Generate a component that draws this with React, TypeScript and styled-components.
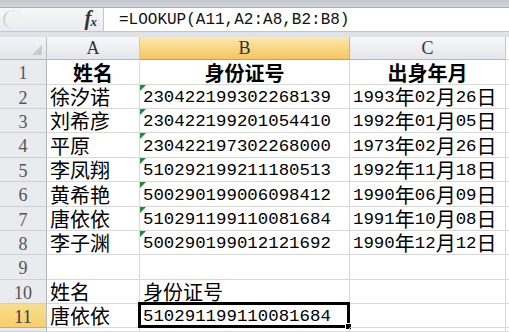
import React from 'react';
import styled, { createGlobalStyle } from 'styled-components';

const Global = createGlobalStyle`
  html, body { margin: 0; padding: 0; background: #fff; }
  body { font-family: "Noto Sans CJK SC", sans-serif; }
  #root { width: 509px; height: 332px; }
`;

const Frame = styled.div`
  width: 509px;
  height: 332px;
  overflow: hidden;
  display: flex;
  flex-direction: column;
  background: #dfe3e8;
`;

const TopBand = styled.div`
  flex: none;
  height: 8px;
  box-sizing: border-box;
  background: linear-gradient(#c3c8ce, #d4d8dd);
  border-bottom: 1px solid #a7acb3;
`;

const FormulaBar = styled.div`
  flex: none;
  height: 24px;
  display: flex;
  box-sizing: border-box;
  border-bottom: 1px solid #c3c7cd;
`;

const NameArea = styled.div`
  position: relative;
  width: 104px;
  box-sizing: border-box;
  display: flex;
  align-items: center;
  justify-content: flex-end;
  padding-right: 7px;
  background: linear-gradient(#f6f7f8, #e9ebee);
  border-right: 1px solid #c4c7cc;
`;

const Arc = styled.span`
  position: absolute;
  left: 3px;
  top: 2px;
  width: 18px;
  height: 18px;
  border-radius: 50%;
  border-left: 2px solid #cfd2d6;
  border-top: 1px solid #e2e4e7;
`;

const Fx = styled.span`
  display: inline-block;
  line-height: 20px;
  font-family: "Liberation Serif", serif;
  font-style: italic;
  font-weight: 700;
  font-size: 21px;
  color: #333;
  letter-spacing: -1px;
  sub {
    font-size: 13px;
    vertical-align: -1px;
  }
`;

const FormulaInput = styled.div`
  flex: 1;
  display: flex;
  align-items: center;
  padding-left: 15px;
  background: #fff;
  font-family: "Liberation Mono", monospace;
  font-size: 16px;
  color: #111;
`;

const Gap = styled.div`
  flex: none;
  height: 5px;
`;

const Sheet = styled.div`
  flex: 1;
  display: grid;
  grid-template-columns: 47px 93px 210px 156px 3px;
  grid-template-rows: 23px 25px 24px 24px 25px 24px 25px 24px 24px 25px 24px 24px 1fr;
  background: #fff;
`;

const Corner = styled.div`
  position: relative;
  box-sizing: border-box;
  background: linear-gradient(#f3f4f6, #e2e5e9);
  border-right: 1px solid #b9bec5;
  border-bottom: 1px solid #b2b8c0;
  &::after {
    content: "";
    position: absolute;
    right: 4px;
    bottom: 4px;
    width: 0;
    height: 0;
    border-left: 10px solid transparent;
    border-bottom: 10px solid #c8ccd1;
  }
`;

const ColHead = styled.div<{ $active?: boolean }>`
  box-sizing: border-box;
  display: flex;
  align-items: center;
  justify-content: center;
  font-family: "Liberation Serif", serif;
  font-size: 18px;
  line-height: 20px;
  color: #333;
  background: ${(p) =>
    p.$active
      ? 'linear-gradient(#fde9ae, #f5c55e)'
      : 'linear-gradient(#f7f8fa, #e3e6ea)'};
  border-right: 1px solid ${(p) => (p.$active ? '#e1ae4c' : '#c6cad0')};
  border-bottom: 1px solid ${(p) => (p.$active ? '#d79e3c' : '#b2b8c0')};
`;

const RowHead = styled.div<{ $active?: boolean }>`
  box-sizing: border-box;
  display: flex;
  align-items: center;
  justify-content: center;
  padding-top: 2px;
  font-family: "Liberation Serif", serif;
  font-size: 18px;
  line-height: 20px;
  color: ${(p) => (p.$active ? '#3a3a3a' : '#555')};
  background: ${(p) => (p.$active ? 'linear-gradient(#f9dd8e, #f5cf6c)' : '#e9ebee')};
  border-right: 1px solid #b2b8c0;
  border-bottom: 1px solid ${(p) => (p.$active ? '#d9ad4e' : '#cdd1d6')};
`;

const Cell = styled.div<{ $center?: boolean; $bold?: boolean }>`
  position: relative;
  box-sizing: border-box;
  display: flex;
  align-items: flex-end;
  justify-content: ${(p) => (p.$center ? 'center' : 'flex-start')};
  padding: 0 0 1px ${(p) => (p.$center ? '0' : '3px')};
  font-size: 20px;
  line-height: 20px;
  font-weight: ${(p) => (p.$bold ? 700 : 400)};
  color: #000;
  white-space: nowrap;
  border-right: 1px solid #d9d9d9;
  border-bottom: 1px solid #d9d9d9;
`;

const Edge = styled.div`
  box-sizing: border-box;
  background: #fff;
  border-bottom: 1px solid #d9d9d9;
`;

const Han = styled.span`
  display: inline-block;
  line-height: 20px;
`;

const Num = styled.span`
  display: inline-block;
  line-height: 18px;
  vertical-align: -2px;
  font-family: "Liberation Mono", monospace;
  font-size: 17.4px;
  font-weight: 400;
`;

const Flag = styled.span`
  position: absolute;
  top: 0;
  left: 0;
  width: 0;
  height: 0;
  border-top: 6px solid #1d8b38;
  border-right: 6px solid transparent;
`;

const Selection = styled.span`
  position: absolute;
  left: -2px;
  top: -2px;
  right: -1px;
  bottom: -1px;
  border: 3px solid #000;
  pointer-events: none;
`;

const Handle = styled.span`
  position: absolute;
  right: -5px;
  bottom: -5px;
  width: 5px;
  height: 5px;
  background: #000;
  border: 1px solid #fff;
`;

const Mixed: React.FC<{ text: string }> = ({ text }) => (
  <>
    {text
      .split(/([\x00-\x7f]+)/)
      .filter(Boolean)
      .map((part, i) =>
        /^[\x00-\x7f]+$/.test(part) ? <Num key={i}>{part}</Num> : <Han key={i}>{part}</Han>
      )}
  </>
);

type Row = {
  n: number | '';
  a?: string;
  b?: string;
  c?: string;
  header?: boolean;
  flag?: boolean;
  selected?: boolean;
};

const rows: Row[] = [
  { n: 1, a: '姓名', b: '身份证号', c: '出身年月', header: true },
  { n: 2, a: '徐汐诺', b: '230422199302268139', c: '1993年02月26日', flag: true },
  { n: 3, a: '刘希彦', b: '230422199201054410', c: '1992年01月05日', flag: true },
  { n: 4, a: '平原', b: '230422197302268000', c: '1973年02月26日', flag: true },
  { n: 5, a: '李凤翔', b: '510292199211180513', c: '1992年11月18日', flag: true },
  { n: 6, a: '黄希艳', b: '500290199006098412', c: '1990年06月09日', flag: true },
  { n: 7, a: '唐依依', b: '510291199110081684', c: '1991年10月08日', flag: true },
  { n: 8, a: '李子渊', b: '500290199012121692', c: '1990年12月12日', flag: true },
  { n: 9 },
  { n: 10, a: '姓名', b: '身份证号' },
  { n: 11, a: '唐依依', b: '510291199110081684', selected: true },
  { n: '' },
];

export default function App() {
  return (
    <>
      <Global />
      <Frame>
        <TopBand />
        <FormulaBar>
          <NameArea>
            <Arc />
            <Fx>
              f<sub>x</sub>
            </Fx>
          </NameArea>
          <FormulaInput>=LOOKUP(A11,A2:A8,B2:B8)</FormulaInput>
        </FormulaBar>
        <Gap />
        <Sheet>
          <Corner />
          <ColHead>A</ColHead>
          <ColHead $active>B</ColHead>
          <ColHead>C</ColHead>
          <Edge />
          {rows.map((r, i) => (
            <React.Fragment key={i}>
              <RowHead $active={r.selected}>{r.n}</RowHead>
              <Cell $center={r.header} $bold={r.header}>
                {r.a && <Mixed text={r.a} />}
              </Cell>
              <Cell $center={r.header} $bold={r.header}>
                {r.flag && <Flag />}
                {r.b && <Mixed text={r.b} />}
                {r.selected && (
                  <Selection>
                    <Handle />
                  </Selection>
                )}
              </Cell>
              <Cell $center={r.header} $bold={r.header}>
                {r.c && <Mixed text={r.c} />}
              </Cell>
              <Edge />
            </React.Fragment>
          ))}
        </Sheet>
      </Frame>
    </>
  );
}
